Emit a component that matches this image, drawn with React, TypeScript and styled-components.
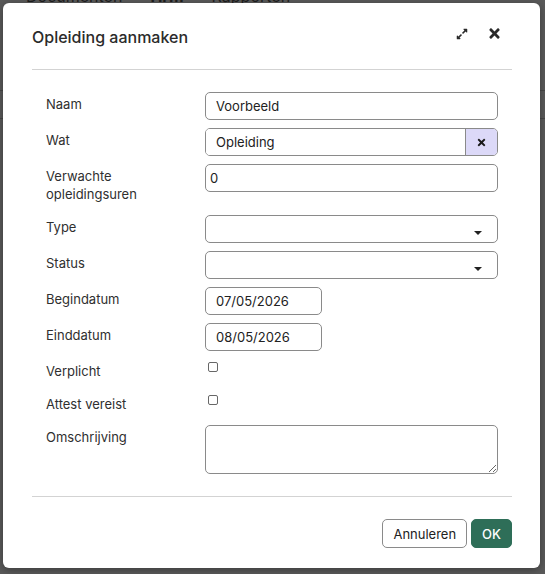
import React from "react";
import styled, { createGlobalStyle } from "styled-components";
import { FaExpandAlt, FaTimes } from "react-icons/fa";

const GlobalStyle = createGlobalStyle`
  html, body { margin: 0; padding: 0; }
  body {
    background: #5a5a5a;
    font-family: Inter, "Noto Sans", "Liberation Sans", sans-serif;
    overflow: hidden;
  }
  * { box-sizing: border-box; }
`;

const Page = styled.div`
  position: relative;
  width: 100%;
  height: 574px;
  overflow: hidden;
`;

const Nav = styled.nav`
  display: flex;
  align-items: flex-end;
  gap: 28px;
  height: 3px;
  padding-left: 26px;
`;

const NavItem = styled.span<{ $active?: boolean }>`
  font-size: 16px;
  line-height: 16px;
  margin-bottom: -1px;
  color: #1e1e1e;
  font-weight: ${(p) => (p.$active ? 700 : 400)};
`;

const PageLine = styled.div<{ $top: number }>`
  margin-top: ${(p) => p.$top}px;
  border-top: 1px solid #474747;
`;

const Overlay = styled.div`
  position: absolute;
  inset: 0;
  padding: 3px 5px 6px 3px;
  display: flex;
`;

const Dialog = styled.div`
  flex: 1;
  display: flex;
  flex-direction: column;
  background: #fff;
  border-radius: 6px;
  padding: 0 28px 0 29px;
  box-shadow: 0 2px 8px rgba(0, 0, 0, 0.35);
`;

const Header = styled.div`
  display: flex;
  align-items: center;
  padding: 23px 0 22px;
  border-bottom: 1px solid #d3d3d3;
`;

const Title = styled.h2`
  flex: 1;
  margin: 0;
  font-size: 16px;
  line-height: 20px;
  font-weight: 500;
  color: #2b2b2b;
`;

const Actions = styled.div`
  display: flex;
  align-items: center;
  gap: 19px;
  padding-right: 10px;
  margin-bottom: 6px;
`;

const IconButton = styled.button`
  display: flex;
  align-items: center;
  justify-content: center;
  padding: 0;
  border: none;
  background: none;
  color: #2a2a2a;
  cursor: pointer;
`;

const Body = styled.div`
  flex: 1;
  display: grid;
  grid-template-columns: 159px 1fr;
  grid-auto-rows: min-content;
  row-gap: 8px;
  padding: 22px 14px 22px;
`;

const Label = styled.label`
  font-size: 13px;
  line-height: 18px;
  padding: 3px 0 4px;
  color: #2f2f2f;
`;

const Cell = styled.div`
  display: flex;
  align-items: flex-start;
`;

const Input = styled.input<{ $width?: number; $pad?: number }>`
  width: ${(p) => (p.$width ? `${p.$width}px` : "100%")};
  height: 28px;
  border: 1px solid #8a8a8a;
  border-radius: 5px;
  padding: 0 ${(p) => (p.$pad ?? 10)}px;
  font-family: inherit;
  font-size: 13px;
  color: #222;
  background: #fff;
  outline: none;
  -moz-appearance: textfield;
  &::-webkit-inner-spin-button,
  &::-webkit-outer-spin-button {
    -webkit-appearance: none;
    margin: 0;
  }
`;

const Combo = styled.div`
  display: flex;
  width: 100%;
  height: 28px;
  border: 1px solid #8a8a8a;
  border-radius: 5px;
  overflow: hidden;
`;

const ComboInput = styled.input`
  flex: 1;
  min-width: 0;
  border: none;
  padding: 0 10px;
  font-family: inherit;
  font-size: 13px;
  color: #222;
  outline: none;
`;

const ClearButton = styled.button`
  width: 32px;
  display: flex;
  align-items: center;
  justify-content: center;
  padding: 0;
  border: none;
  border-left: 1px solid #8a8a8a;
  background: #dcd9f8;
  color: #1a1a1a;
`;

const SelectWrap = styled.div`
  position: relative;
  width: 100%;
`;

const Select = styled.select`
  width: 100%;
  height: 28px;
  border: 1px solid #8a8a8a;
  border-radius: 5px;
  padding: 0 10px;
  font-family: inherit;
  font-size: 13px;
  background: #fff;
  appearance: none;
  -webkit-appearance: none;
  outline: none;
`;

const Caret = styled.svg`
  position: absolute;
  right: 16px;
  top: 16px;
  pointer-events: none;
`;

const Check = styled.input`
  appearance: none;
  -webkit-appearance: none;
  width: 10px;
  height: 10px;
  margin: 3px 0 0 3px;
  border: 1px solid #676767;
  border-radius: 2px;
  background: #fff;
`;

const TextArea = styled.textarea`
  width: 100%;
  height: 49px;
  border: 1px solid #8a8a8a;
  border-radius: 5px;
  padding: 6px 10px;
  font-family: inherit;
  font-size: 13px;
  outline: none;
  display: block;
`;

const Footer = styled.div`
  display: flex;
  justify-content: flex-end;
  gap: 4px;
  padding: 22px 0 21px;
  border-top: 1px solid #d3d3d3;
`;

const Button = styled.button<{ $primary?: boolean }>`
  height: 29px;
  padding: 0 10px;
  border-radius: 5px;
  font-family: inherit;
  font-size: 13px;
  font-weight: ${(p) => (p.$primary ? 500 : 400)};
  color: ${(p) => (p.$primary ? "#fff" : "#222")};
  background: ${(p) => (p.$primary ? "#2e6e58" : "#fff")};
  border: 1px solid ${(p) => (p.$primary ? "#2e6e58" : "#8a8a8a")};
  cursor: pointer;
`;

const DropCaret = () => (
  <Caret width="8" height="4" viewBox="0 0 8 4">
    <path d="M0 0 H8 L4 4 Z" fill="#222" />
  </Caret>
);

export default function App() {
  return (
    <>
      <GlobalStyle />
      <Page>
        <Nav>
          <NavItem>Documenten</NavItem>
          <NavItem $active>Hrm</NavItem>
          <NavItem>Rapporten</NavItem>
        </Nav>
        <PageLine $top={87} />
        <PageLine $top={27} />
        <Overlay>
          <Dialog>
            <Header>
              <Title>Opleiding aanmaken</Title>
              <Actions>
                <IconButton aria-label="Maximaliseren">
                  <FaExpandAlt size={12} />
                </IconButton>
                <IconButton aria-label="Sluiten">
                  <FaTimes size={15} />
                </IconButton>
              </Actions>
            </Header>
            <Body>
              <Label>Naam</Label>
              <Cell>
                <Input defaultValue="Voorbeeld" />
              </Cell>

              <Label>Wat</Label>
              <Cell>
                <Combo>
                  <ComboInput defaultValue="Opleiding" />
                  <ClearButton aria-label="Wissen">
                    <FaTimes size={11} />
                  </ClearButton>
                </Combo>
              </Cell>

              <Label>
                Verwachte
                <br />
                opleidingsuren
              </Label>
              <Cell>
                <Input type="number" defaultValue="0" $pad={4} />
              </Cell>

              <Label>Type</Label>
              <Cell>
                <SelectWrap>
                  <Select defaultValue="">
                    <option value=""></option>
                  </Select>
                  <DropCaret />
                </SelectWrap>
              </Cell>

              <Label>Status</Label>
              <Cell>
                <SelectWrap>
                  <Select defaultValue="">
                    <option value=""></option>
                  </Select>
                  <DropCaret />
                </SelectWrap>
              </Cell>

              <Label>Begindatum</Label>
              <Cell>
                <Input defaultValue="07/05/2026" $width={117} />
              </Cell>

              <Label>Einddatum</Label>
              <Cell>
                <Input defaultValue="08/05/2026" $width={117} />
              </Cell>

              <Label>Verplicht</Label>
              <Cell>
                <Check type="checkbox" />
              </Cell>

              <Label>Attest vereist</Label>
              <Cell>
                <Check type="checkbox" />
              </Cell>

              <Label>Omschrijving</Label>
              <Cell>
                <TextArea />
              </Cell>
            </Body>
            <Footer>
              <Button>Annuleren</Button>
              <Button $primary>OK</Button>
            </Footer>
          </Dialog>
        </Overlay>
      </Page>
    </>
  );
}
